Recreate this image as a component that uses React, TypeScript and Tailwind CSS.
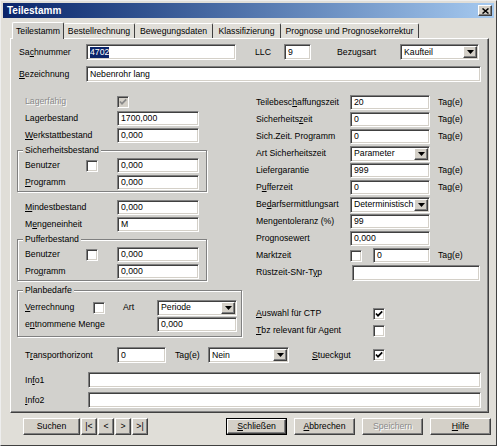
import type { ReactNode } from "react";

const sunkenEdge =
  "border border-t-[#808080] border-l-[#808080] border-r-white border-b-white shadow-[inset_1px_1px_0_#404040,inset_-1px_-1px_0_#d4d0c8]";
const raised =
  "border border-t-white border-l-white border-r-[#404040] border-b-[#404040] shadow-[inset_-1px_-1px_0_#808080]";
const disabledText = "text-[#8a8a8a] [text-shadow:1px_1px_0_#fff]";

function Field({ w, h = "h-[15px]", children }: { w: string; h?: string; children?: ReactNode }) {
  return (
    <div className={`${sunkenEdge} bg-white ${w} ${h} shrink-0 flex items-center pl-[3px] overflow-hidden whitespace-nowrap`}>
      {children}
    </div>
  );
}

function Select({ w, value, h = "h-[16px]" }: { w: string; value: string; h?: string }) {
  return (
    <div className={`${sunkenEdge} bg-white ${w} ${h} shrink-0 flex items-stretch p-px`}>
      <span className="flex-1 flex items-center pl-[2px] whitespace-nowrap overflow-hidden">{value}</span>
      <span className={`${raised} bg-[#d4d0c8] w-[14px] flex items-center justify-center`}>
        <svg width="7" height="4" viewBox="0 0 7 4">
          <path d="M0 0h7L3.5 4z" fill="#000" />
        </svg>
      </span>
    </div>
  );
}

function Check({ checked, disabled }: { checked?: boolean; disabled?: boolean }) {
  return (
    <div className={`${sunkenEdge} ${disabled ? "bg-[#d4d0c8]" : "bg-white"} w-[12px] h-[12px] shrink-0 flex items-center justify-center`}>
      {checked && (
        <svg width="8" height="8" viewBox="0 0 8 8">
          <path d="M1 3.5l2 2.2L7.2 1.3" stroke={disabled ? "#8a8a8a" : "#000"} strokeWidth="1.7" fill="none" />
        </svg>
      )}
    </div>
  );
}

function Btn({ w, children, disabled, isDefault }: { w: string; children: ReactNode; disabled?: boolean; isDefault?: boolean }) {
  return (
    <div className={`${isDefault ? "border border-black" : ""} ${w} h-[17px] shrink-0 flex`}>
      <div className={`${raised} bg-[#d4d0c8] flex-1 flex items-center justify-center ${disabled ? disabledText : ""}`}>
        {children}
      </div>
    </div>
  );
}

function Group({ title, w, h, pt, children }: { title: string; w: string; h: string; pt: string; children: ReactNode }) {
  return (
    <div className={`relative ${w} ${h} ${pt} border border-[#808080] shadow-[inset_1px_1px_0_#fff,1px_1px_0_#fff]`}>
      <span className="absolute -top-[6px] left-[5px] px-[2px] bg-[#d2d1cd]">{title}</span>
      {children}
    </div>
  );
}

function LRow({ label, children, disabled }: { label: ReactNode; children: ReactNode; disabled?: boolean }) {
  return (
    <div className="flex items-center h-[17px] pl-[8px]">
      <span className={`w-[92px] shrink-0 ${disabled ? disabledText : ""}`}>{label}</span>
      {children}
    </div>
  );
}

function GRow({ label, checked, value }: { label: ReactNode; checked?: boolean; value: string }) {
  return (
    <div className="flex items-center h-[17px] pl-[7px]">
      <span className="w-[61px] shrink-0">{label}</span>
      <div className="w-[31px] shrink-0">{checked !== undefined && <Check checked={checked} />}</div>
      <Field w="w-[82px]">{value}</Field>
    </div>
  );
}

function RRow({ label, children }: { label: ReactNode; children: ReactNode }) {
  return (
    <div className="flex items-center h-[17px]">
      <span className="w-[94px] shrink-0 whitespace-nowrap">{label}</span>
      {children}
    </div>
  );
}

const Tag = () => <span className="ml-[8px]">Tag(e)</span>;

export default function App() {
  return (
    <div className="w-[497px] h-[446px] overflow-hidden bg-[#e0ded8] border border-t-[#eeeeee] border-l-[#eeeeee] border-r-[#404040] border-b-[#404040] p-[2px] font-['Liberation_Sans',Arial,sans-serif] text-[8.7px] leading-[11px] text-black">
      {/* Title bar */}
      <div className="h-[15px] flex items-center justify-between bg-linear-to-r from-[#0a246a] to-[#a6caf0] pl-[4px] pr-[2px]">
        <span className="text-white font-bold text-[10px]">Teilestamm</span>
        <div className={`${raised} bg-[#d4d0c8] w-[14px] h-[11px] flex items-center justify-center`}>
          <svg width="7" height="6" viewBox="0 0 7 6">
            <path d="M0.5 0.5l6 5M6.5 0.5l-6 5" stroke="#000" strokeWidth="1.5" />
          </svg>
        </div>
      </div>

      {/* Tabs */}
      <div className="flex items-end h-[16px] mt-[4px] pl-[9px]">
        <div className="relative z-10 w-[52px] h-[17px] -mb-px bg-[#d2d1cd] border-t border-l border-t-white border-l-white border-r border-r-[#404040] rounded-t-[2px] flex items-center justify-center">
          Teilestamm
        </div>
        <div className="w-[71px] h-[15px] border-t border-t-white border-r border-r-[#404040] rounded-t-[2px] flex items-center justify-center">
          Bestellrechnung
        </div>
        <div className="w-[78px] h-[15px] border-t border-t-white border-r border-r-[#404040] rounded-t-[2px] flex items-center justify-center">
          Bewegungsdaten
        </div>
        <div className="w-[68px] h-[15px] border-t border-t-white border-r border-r-[#404040] rounded-t-[2px] flex items-center justify-center">
          Klassifizierung
        </div>
        <div className="w-[138px] h-[15px] border-t border-t-white border-r border-r-[#404040] rounded-t-[2px] flex items-center justify-center">
          Prognose und Prognosekorrektur
        </div>
      </div>

      {/* Panel */}
      <div className="ml-[7px] w-[479px] h-[375px] bg-[#d2d1cd] border border-t-white border-l-white border-r-[#404040] border-b-[#404040] shadow-[inset_-1px_-1px_0_#808080] pl-[6px] pt-[5px]">
        <div className="flex items-center h-[16px]">
          <span className="ml-[2px] w-[67px] shrink-0">
            Sa<u>c</u>hnummer
          </span>
          <Field w="w-[150px]" h="h-[16px]">
            <span className="bg-[#0a246a] text-white">4702</span>
          </Field>
          <span className="ml-[19px] w-[29px] shrink-0">LLC</span>
          <Field w="w-[27px]" h="h-[16px]">9</Field>
          <span className="ml-[26px] w-[63px] shrink-0">Bezugsart</span>
          <Select w="w-[79px]" value="Kaufteil" />
        </div>
        <div className="flex items-center h-[16px] mt-[6px]">
          <span className="ml-[2px] w-[67px] shrink-0">
            <u>B</u>ezeichnung
          </span>
          <Field w="w-[395px]" h="h-[16px]">Nebenrohr lang</Field>
        </div>

        <div className="flex mt-[11px]">
          {/* Left column */}
          <div className="w-[225px] shrink-0">
            <LRow label="Lagerfähig" disabled>
              <Check checked disabled />
            </LRow>
            <LRow label="Lagerbestand">
              <Field w="w-[82px]">1700,000</Field>
            </LRow>
            <LRow label={<><u>W</u>erkstattbestand</>}>
              <Field w="w-[82px]">0,000</Field>
            </LRow>
            <div className="mt-[6px]">
              <Group title="Sicherheitsbestand" w="w-[190px]" h="h-[42px]" pt="pt-[6px]">
                <GRow label="Benutzer" checked={false} value="0,000" />
                <GRow label={<><u>P</u>rogramm</>} value="0,000" />
              </Group>
            </div>
            <div className="mt-[7px]">
              <LRow label={<><u>M</u>indestbestand</>}>
                <Field w="w-[82px]">0,000</Field>
              </LRow>
              <LRow label={<>M<u>e</u>ngeneinheit</>}>
                <Field w="w-[82px]">M</Field>
              </LRow>
            </div>
            <div className="mt-[6px]">
              <Group title="Pufferbestand" w="w-[190px]" h="h-[42px]" pt="pt-[6px]">
                <GRow label="Benutzer" checked={false} value="0,000" />
                <GRow label={<>Pro<u>g</u>ramm</>} value="0,000" />
              </Group>
            </div>
            <div className="mt-[9px]">
              <Group title="Planbedarfe" w="w-[225px]" h="h-[47px]" pt="pt-[8px]">
                <div className="flex items-center h-[17px] pl-[7px]">
                  <span className="w-[68px] shrink-0">
                    <u>V</u>errechnung
                  </span>
                  <div className="w-[30px] shrink-0">
                    <Check />
                  </div>
                  <span className="w-[34px] shrink-0">Art</span>
                  <Select w="w-[80px]" value="Periode" />
                </div>
                <div className="flex items-center h-[17px] pl-[7px]">
                  <span className="w-[132px] shrink-0">
                    e<u>n</u>tnommene Menge
                  </span>
                  <Field w="w-[80px]">0,000</Field>
                </div>
              </Group>
            </div>
          </div>

          {/* Right column */}
          <div className="ml-[14px] pt-px">
            <RRow label={<>Teilebesc<u>h</u>affungszeit</>}>
              <Field w="w-[80px]">20</Field>
              <Tag />
            </RRow>
            <RRow label={<>Sicherheits<u>z</u>eit</>}>
              <Field w="w-[80px]">0</Field>
              <Tag />
            </RRow>
            <RRow label="Sich.Zeit. Programm">
              <Field w="w-[80px]">0</Field>
              <Tag />
            </RRow>
            <RRow label="Art Sicherheitszeit">
              <Select w="w-[80px]" value="Parameter" />
            </RRow>
            <RRow label="Liefergarantie">
              <Field w="w-[80px]">999</Field>
              <Tag />
            </RRow>
            <RRow label={<>P<u>u</u>fferzeit</>}>
              <Field w="w-[80px]">0</Field>
              <Tag />
            </RRow>
            <RRow label={<>Be<u>d</u>arfsermittlungsart</>}>
              <Select w="w-[80px]" value="Deterministisch" />
            </RRow>
            <RRow label="Mengentoleranz (%)">
              <Field w="w-[80px]">99</Field>
            </RRow>
            <RRow label="Prognosewert">
              <Field w="w-[80px]">0,000</Field>
            </RRow>
            <RRow label="Marktzeit">
              <div className="w-[23px] shrink-0">
                <Check />
              </div>
              <Field w="w-[57px]">0</Field>
              <Tag />
            </RRow>
            <div className="flex items-center h-[17px]">
              <span className="w-[96px] shrink-0">
                Rüstzeit-SNr-T<u>y</u>p
              </span>
              <Field w="w-[128px]" h="h-[16px]" />
            </div>
            <div className="mt-[24px]">
              <div className="flex items-center h-[17px]">
                <span className="w-[117px] shrink-0">
                  <u>A</u>uswahl für CTP
                </span>
                <Check checked />
              </div>
              <div className="flex items-center h-[17px]">
                <span className="w-[117px] shrink-0">
                  <u>T</u>bz relevant für Agent
                </span>
                <Check />
              </div>
            </div>
          </div>
        </div>

        {/* Bottom rows */}
        <div className="flex items-center h-[16px] mt-[8px] pl-[8px]">
          <span className="w-[92px] shrink-0">
            T<u>r</u>ansporthorizont
          </span>
          <Field w="w-[49px]" h="h-[16px]">0</Field>
          <span className="ml-[9px] w-[33px] shrink-0">Tag(e)</span>
          <Select w="w-[81px]" value="Nein" />
          <span className="ml-[23px] w-[61px] shrink-0">
            <u>S</u>tueckgut
          </span>
          <Check checked />
        </div>
        <div className="flex items-center h-[16px] mt-[9px] pl-[8px]">
          <span className="w-[63px] shrink-0">
            In<u>f</u>o1
          </span>
          <Field w="w-[393px]" h="h-[16px]" />
        </div>
        <div className="flex items-center h-[16px] mt-[4px] pl-[8px]">
          <span className="w-[63px] shrink-0">
            <u>I</u>nfo2
          </span>
          <Field w="w-[393px]" h="h-[16px]" />
        </div>
      </div>

      {/* Button row */}
      <div className="flex items-center mt-[5px] pl-[20px]">
        <Btn w="w-[57px]">Suchen</Btn>
        <div className="flex gap-px ml-px">
          <Btn w="w-[16px]">|&lt;</Btn>
          <Btn w="w-[16px]">&lt;</Btn>
          <Btn w="w-[16px]">&gt;</Btn>
          <Btn w="w-[16px]">&gt;|</Btn>
        </div>
        <div className="flex gap-[7px] ml-[78px]">
          <Btn w="w-[61px]" isDefault>
            <span>
              <u>S</u>chließen
            </span>
          </Btn>
          <Btn w="w-[61px]">
            <span>
              <u>A</u>bbrechen
            </span>
          </Btn>
          <Btn w="w-[61px]" disabled>
            Speichern
          </Btn>
          <Btn w="w-[61px]">
            <span>
              <u>H</u>ilfe
            </span>
          </Btn>
        </div>
      </div>
    </div>
  );
}
